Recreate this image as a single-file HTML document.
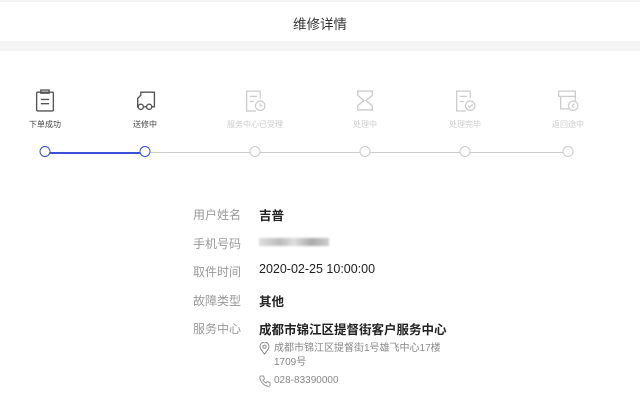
<!DOCTYPE html>
<html><head><meta charset="utf-8"><style>
body{margin:0;width:640px;height:408px;background:#fff;font-family:"Liberation Sans","Noto Sans CJK SC",sans-serif;position:relative;overflow:hidden}
.a{position:absolute;white-space:nowrap}
.lbl{left:193px;font-size:12px;color:#999}
.val{left:259px;font-size:12.5px;color:#222;font-weight:bold}
.st{font-size:8px;transform:translateX(-50%);color:#ccc}
.ic{position:absolute;transform:translate(-50%,0)}
.c{position:absolute;width:9px;height:9px;border-radius:50%;border:1.5px solid #ccc;background:#fff;top:146px;transform:translateX(-50%)}
</style></head><body>
<div class="a" style="left:0;top:0;width:640px;height:2px;background:#f3f3f3"></div>
<div class="a" style="left:0;width:640px;top:13px;text-align:center;font-size:13.5px;color:#333">维修详情</div>
<div class="a" style="left:0;top:41px;width:640px;height:10px;background:#f5f5f5"></div>

<svg class="ic" style="left:45px;top:89px" width="22" height="23" viewBox="0 0 20 22" fill="none" stroke="#555" stroke-width="1.3"><rect x="2" y="3" width="16" height="18" rx="1"/><rect x="6" y="1" width="8" height="3"/><path d="M6 10h8M6 14h8"/></svg>
<svg class="ic" style="left:145px;top:89px" width="23" height="23" viewBox="0 0 22 22" fill="none" stroke="#555" stroke-width="1.3"><path d="M7 3h13v14H4v-8l3-3z"/><circle cx="7" cy="17" r="2.5" fill="#fff"/><circle cx="15" cy="17" r="2.5" fill="#fff"/></svg>
<svg class="ic" style="left:255px;top:89px" width="23" height="23" viewBox="0 0 22 22" fill="none" stroke="#ccc" stroke-width="1.2"><path d="M16 9V2H3v19h9"/><path d="M6 7h7M6 12h4"/><circle cx="16" cy="16" r="4.5"/><path d="M16 14v2h2"/></svg>
<svg class="ic" style="left:365px;top:89px" width="21" height="23" viewBox="0 0 20 22" fill="none" stroke="#ccc" stroke-width="1.3"><path d="M3 2h14v4l-6 5 6 5v4H3v-4l6-5-6-5z"/></svg>
<svg class="ic" style="left:465px;top:89px" width="23" height="23" viewBox="0 0 22 22" fill="none" stroke="#ccc" stroke-width="1.2"><path d="M16 9V2H3v19h9"/><path d="M6 7h7M6 12h4"/><circle cx="16" cy="16" r="4.5"/><path d="M14 16l1.5 1.5 3-3"/></svg>
<svg class="ic" style="left:568px;top:89px" width="23" height="23" viewBox="0 0 22 22" fill="none" stroke="#ccc" stroke-width="1.2"><path d="M2 2h16v5H2zM4 7v12h8"/><path d="M18 7v4"/><circle cx="16" cy="16" r="4.5"/><path d="M17 14l-2 2 2 2"/></svg>

<div class="a st" style="left:45px;top:119px;color:#444">下单成功</div>
<div class="a st" style="left:145px;top:119px;color:#444">送修中</div>
<div class="a st" style="left:255px;top:119px">服务中心已受理</div>
<div class="a st" style="left:365px;top:119px">处理中</div>
<div class="a st" style="left:465px;top:119px">处理完毕</div>
<div class="a st" style="left:568px;top:119px">返回途中</div>

<div class="a" style="left:45px;top:152px;width:100px;height:1.5px;background:#3b4fd8"></div>
<div class="a" style="left:145px;top:152px;width:423px;height:1px;background:#ccc"></div>
<div class="c" style="left:45px;border-color:#3b4fd8"></div>
<div class="c" style="left:145px;border-color:#3b4fd8"></div>
<div class="c" style="left:255px"></div>
<div class="c" style="left:365px"></div>
<div class="c" style="left:465px"></div>
<div class="c" style="left:568px"></div>

<div class="a lbl" style="top:206px">用户姓名</div><div class="a val" style="top:205px">吉普</div>
<div class="a lbl" style="top:235px">手机号码</div>
<div class="a" style="left:259px;top:238px;width:70px;height:8px;background:linear-gradient(90deg,#ddd,#bbb 30%,#ddd 50%,#aaa 75%,#ccc);filter:blur(1px)"></div>
<div class="a lbl" style="top:263px">取件时间</div><div class="a val" style="top:262px;font-weight:normal">2020-02-25 10:00:00</div>
<div class="a lbl" style="top:292px">故障类型</div><div class="a val" style="top:291px">其他</div>
<div class="a lbl" style="top:320px">服务中心</div><div class="a val" style="top:319px">成都市锦江区提督街客户服务中心</div>
<svg class="a" style="left:259px;top:342px" width="11" height="13" viewBox="0 0 11 13" fill="none" stroke="#888" stroke-width="1"><path d="M5.5 12C2 8 1 6 1 4.5a4.5 4.5 0 019 0C10 6 9 8 5.5 12z"/><circle cx="5.5" cy="4.7" r="1.6"/></svg>
<div class="a" style="left:274px;top:342px;font-size:10px;color:#888;line-height:14px">成都市锦江区提督街1号雄飞中心17楼<br>1709号</div>
<svg class="a" style="left:259px;top:375px" width="12" height="12" viewBox="0 0 12 12" fill="none" stroke="#999" stroke-width="1"><path d="M2 1l2.5 0 1 3-1.5 1c.7 1.5 1.5 2.3 3 3l1-1.5 3 1V10c0 1-1 1.5-2 1.3C5 10.5 1.5 7 .8 3 .7 2 1 1 2 1z"/></svg>
<div class="a" style="left:274px;top:375px;font-size:10px;color:#888">028-83390000</div>
</body></html>
